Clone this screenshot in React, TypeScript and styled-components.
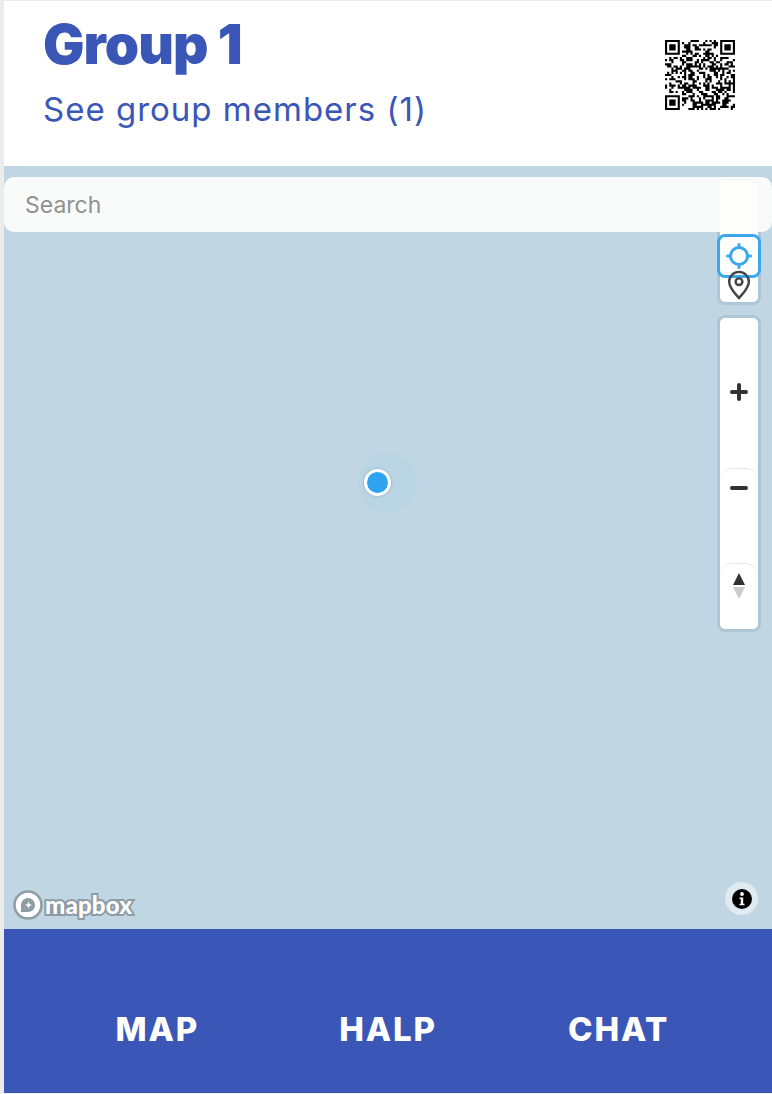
import React from "react";
import styled, { createGlobalStyle } from "styled-components";

const BLUE = "#3a56b7";

const GlobalStyle = createGlobalStyle`
  html, body {
    margin: 0;
    padding: 0;
    background: #f1f1f1;
  }
  * {
    box-sizing: border-box;
  }
`;

const Page = styled.div`
  width: 772px;
  height: 1094px;
  padding: 1px 0 1px 4px;
  background: #ececec;
  display: flex;
  flex-direction: column;
  font-family: Inter, "Noto Sans", sans-serif;
  overflow: hidden;
`;

const Header = styled.header`
  height: 165px;
  flex: none;
  background: #fff;
  display: flex;
  justify-content: space-between;
  padding: 0 37px 0 39px;
`;

const Titles = styled.div`
  display: flex;
  flex-direction: column;
`;

const Title = styled.h1`
  margin: 13px 0 0;
  font-size: 55px;
  line-height: 60px;
  font-weight: 900;
  letter-spacing: -0.9px;
  color: ${BLUE};
`;

const Members = styled.a`
  margin-top: 15px;
  font-size: 33px;
  line-height: 40px;
  font-weight: 400;
  letter-spacing: 1px;
  color: ${BLUE};
`;

const QrWrap = styled.div`
  margin-top: 39px;
  width: 70px;
  height: 70px;
`;

const MapArea = styled.main`
  position: relative;
  flex: 1;
  background: #c0d6e3;
  padding-top: 11px;
`;

const SearchInput = styled.input`
  position: relative;
  z-index: 2;
  display: block;
  width: 100%;
  height: 55px;
  border: none;
  outline: none;
  border-radius: 10px;
  padding: 0 21px;
  background: rgba(253, 254, 252, 0.93);
  font-family: inherit;
  font-size: 23px;
  color: #333;
  &::placeholder {
    color: #8f9291;
  }
`;

const ControlStack = styled.div`
  position: absolute;
  top: 12px;
  left: 713px;
  width: 44px;
  display: flex;
  flex-direction: column;
  gap: 10px;
`;

const ControlGroup = styled.div`
  background: #fff;
  border: 3px solid #aec5d3;
  border-radius: 8px;
  display: flex;
  flex-direction: column;
`;

const TopGroup = styled(ControlGroup)`
  position: relative;
  height: 127px;
`;

const GeoButton = styled.div`
  position: absolute;
  z-index: 1;
  left: -3px;
  top: 53px;
  width: 44px;
  height: 44px;
  border: 3px solid #3ba8ee;
  border-radius: 8px;
  background: #fff;
  display: flex;
  align-items: center;
  justify-content: center;
`;

const PinButton = styled.div`
  position: absolute;
  z-index: 2;
  left: 0;
  bottom: 0;
  width: 38px;
  height: 34px;
  display: flex;
  align-items: center;
  justify-content: center;
`;

const ZoomGroup = styled(ControlGroup)`
  height: 317px;
`;

const ZoomButton = styled.div<{ $height: number; $divider?: boolean; $top: number }>`
  height: ${(p) => p.$height}px;
  padding-top: ${(p) => p.$top}px;
  flex: none;
  display: flex;
  justify-content: center;
  align-items: flex-start;
  ${(p) =>
    p.$divider
      ? `border-top: 1px solid #e6e6e6; border-radius: 12px 12px 0 0;`
      : ""}
`;

const Marker = styled.div`
  position: absolute;
  left: 354px;
  top: 287px;
  width: 59px;
  height: 59px;
  border-radius: 50%;
  background: rgba(59, 168, 238, 0.05);
`;

const Dot = styled.div`
  position: absolute;
  left: 6px;
  top: 16px;
  width: 27px;
  height: 27px;
  border-radius: 50%;
  background: #2ea3ef;
  border: 3px solid #fff;
  box-shadow: 0 0 3px rgba(0, 0, 0, 0.2);
`;

const Logo = styled.div`
  position: absolute;
  left: 9px;
  bottom: 9px;
  display: flex;
  align-items: center;
  gap: 2px;
`;

const LogoText = styled.span`
  font-family: "Lato", sans-serif;
  font-size: 24px;
  line-height: 28px;
  font-weight: 900;
  letter-spacing: 0.2px;
  color: #fff;
  -webkit-text-stroke: 4px #8d9ca5;
  paint-order: stroke fill;
`;

const InfoBadge = styled.div`
  position: absolute;
  left: 721px;
  bottom: 14px;
  width: 33px;
  height: 33px;
  border-radius: 50%;
  background: rgba(255, 255, 255, 0.5);
  display: flex;
  align-items: center;
  justify-content: center;
`;

const Nav = styled.nav`
  height: 164px;
  flex: none;
  background: ${BLUE};
  display: grid;
  grid-template-columns: repeat(3, 1fr);
  padding: 81px 38px 0;
`;

const NavItem = styled.a`
  text-align: center;
  color: #fff;
  font-size: 33px;
  line-height: 38px;
  font-weight: 800;
  letter-spacing: 1.8px;
`;

const qrModules = (): string => {
  const n = 33;
  let seed = 20;
  const rand = () => {
    seed = (seed * 1103515245 + 12345) & 0x7fffffff;
    return (seed >> 12) % 100;
  };
  const finder = (x: number, y: number, ox: number, oy: number) => {
    const dx = x - ox;
    const dy = y - oy;
    if (dx < -1 || dy < -1 || dx > 7 || dy > 7) return null;
    if (dx < 0 || dy < 0 || dx > 6 || dy > 6) return false;
    const ring = Math.min(dx, dy, 6 - dx, 6 - dy);
    return ring !== 1;
  };
  let d = "";
  for (let y = 0; y < n; y++) {
    for (let x = 0; x < n; x++) {
      const value = rand() < 52;
      const f =
        finder(x, y, 0, 0) ?? finder(x, y, n - 7, 0) ?? finder(x, y, 0, n - 7);
      if (f ?? value) d += `M${x} ${y}h1v1h-1z`;
    }
  }
  return d;
};

const QrCode = () => (
  <svg width={70} height={70} viewBox="0 0 33 33">
    <path d={qrModules()} fill="#000" />
  </svg>
);

const GeoIcon = () => (
  <svg width={26} height={26} viewBox="0 0 26 26" fill="none" stroke="#3ba8ee" strokeWidth={3}>
    <circle cx={13} cy={13} r={8.5} />
    <path d="M13 1.5v3M13 21.5v3M1.5 13h3M21.5 13h3" strokeLinecap="round" />
  </svg>
);

const PinIcon = () => (
  <svg width={26} height={30} viewBox="0 0 26 32" fill="none" stroke="#454545" strokeWidth={2.6}>
    <path d="M13 30 C8 24 2.5 19 2.5 12.5 A10.5 10.5 0 0 1 23.5 12.5 C23.5 19 18 24 13 30Z" strokeLinejoin="round" />
    <circle cx={13} cy={12.5} r={3.6} />
  </svg>
);

const PlusIcon = () => (
  <svg width={18} height={18} viewBox="0 0 18 18" stroke="#333" strokeWidth={4} strokeLinecap="round">
    <path d="M9 2v14M2 9h14" />
  </svg>
);

const MinusIcon = () => (
  <svg width={18} height={6} viewBox="0 0 18 6" stroke="#333" strokeWidth={4} strokeLinecap="round">
    <path d="M2 3h14" />
  </svg>
);

const CompassIcon = () => (
  <svg width={12} height={26} viewBox="0 0 12 26">
    <path d="M6 0L12 12H0Z" fill="#333" />
    <path d="M6 26L12 14H0Z" fill="#ccc" />
  </svg>
);

const LogoMark = () => (
  <svg width={30} height={30} viewBox="0 0 30 30">
    <circle cx={15} cy={15} r={13.5} fill="#fff" stroke="#8d9ca5" strokeWidth={2.5} />
    <path d="M8 22V15a7 7 0 1 1 7 7Z" fill="#8d9ca5" />
    <path d="M15.5 11.5l1 2.5 2.5 1-2.5 1-1 2.5-1-2.5-2.5-1 2.5-1Z" fill="#fff" />
  </svg>
);

const InfoIcon = () => (
  <svg width={20} height={20} viewBox="0 0 20 20">
    <circle cx={10} cy={10} r={10} fill="#000" />
    <circle cx={10} cy={5} r={1.9} fill="#fff" />
    <path d="M7.5 8.5h3.7v6.2h1.3v1.6h-5v-1.6h1.3V10H7.5Z" fill="#fff" />
  </svg>
);

export default function App() {
  return (
    <Page>
      <GlobalStyle />
      <Header>
        <Titles>
          <Title>Group 1</Title>
          <Members>See group members (1)</Members>
        </Titles>
        <QrWrap>
          <QrCode />
        </QrWrap>
      </Header>
      <MapArea>
        <SearchInput placeholder="Search" readOnly />
        <ControlStack>
          <TopGroup>
            <GeoButton>
              <GeoIcon />
            </GeoButton>
            <PinButton>
              <PinIcon />
            </PinButton>
          </TopGroup>
          <ZoomGroup>
            <ZoomButton $height={150} $top={65}>
              <PlusIcon />
            </ZoomButton>
            <ZoomButton $height={95} $divider $top={16}>
              <MinusIcon />
            </ZoomButton>
            <ZoomButton $height={66} $divider $top={9}>
              <CompassIcon />
            </ZoomButton>
          </ZoomGroup>
        </ControlStack>
        <Marker>
          <Dot />
        </Marker>
        <Logo>
          <LogoMark />
          <LogoText>mapbox</LogoText>
        </Logo>
        <InfoBadge>
          <InfoIcon />
        </InfoBadge>
      </MapArea>
      <Nav>
        <NavItem>MAP</NavItem>
        <NavItem>HALP</NavItem>
        <NavItem>CHAT</NavItem>
      </Nav>
    </Page>
  );
}
